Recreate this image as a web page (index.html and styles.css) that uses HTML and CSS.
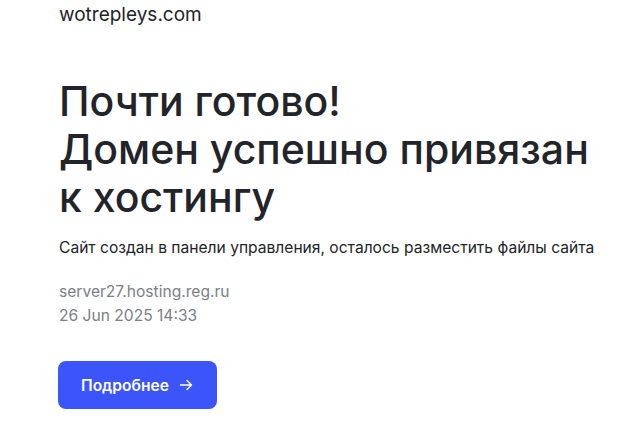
FILE: index.html
```html
<!DOCTYPE html>
<html lang="ru">
<head>
<meta charset="utf-8">
<link rel="stylesheet" href="styles.css">
</head>
<body>
<main class="page">
  <div class="domain">wotrepleys.com</div>
  <h1 class="title">Почти готово!<br>Домен успешно привязан<br>к хостингу</h1>
  <p class="lead">Сайт создан в панели управления, осталось разместить файлы сайта</p>
  <div class="meta">
    <div>server27.hosting.reg.ru</div>
    <div>26 Jun 2025 14:33</div>
  </div>
  <a class="btn" href="#">Подробнее
    <svg class="arrow" width="14" height="14" viewBox="0 0 14 14" fill="none" stroke="currentColor" stroke-width="1.4" stroke-linecap="round" stroke-linejoin="round"><path d="M1.5 7h11M8 2.5L12.5 7 8 11.5"/></svg>
  </a>
</main>
</body>
</html>
```
FILE: styles.css
```css
html, body { margin: 0; padding: 0; background: #fff; }
body { font-family: Inter, "Noto Sans", sans-serif; color: #222429; }
.page { padding: 2px 0 0 58px; }
.domain { padding-left: 1px; font-size: 19px; line-height: 26px; color: #222429; }
.title { margin: 49px 0 0; padding-left: 1px; font-size: 41px; line-height: 48px; font-weight: 500; color: #222429; }
.lead { margin: 16px 0 0; padding-left: 1px; font-size: 15.6px; line-height: 22px; color: #222429; }
.meta { margin-top: 21px; padding-left: 1px; font-size: 15.6px; line-height: 24px; color: #7b7f88; }
.btn { margin-top: 33px; display: inline-flex; align-items: center; gap: 10px; height: 48px; padding: 0 0 0 23px; box-sizing: border-box; width: 159px; background: #3b55fb; color: #fff; border-radius: 8px; font-size: 15.6px; font-weight: 600; text-decoration: none; }
.arrow { display: block; }
```
